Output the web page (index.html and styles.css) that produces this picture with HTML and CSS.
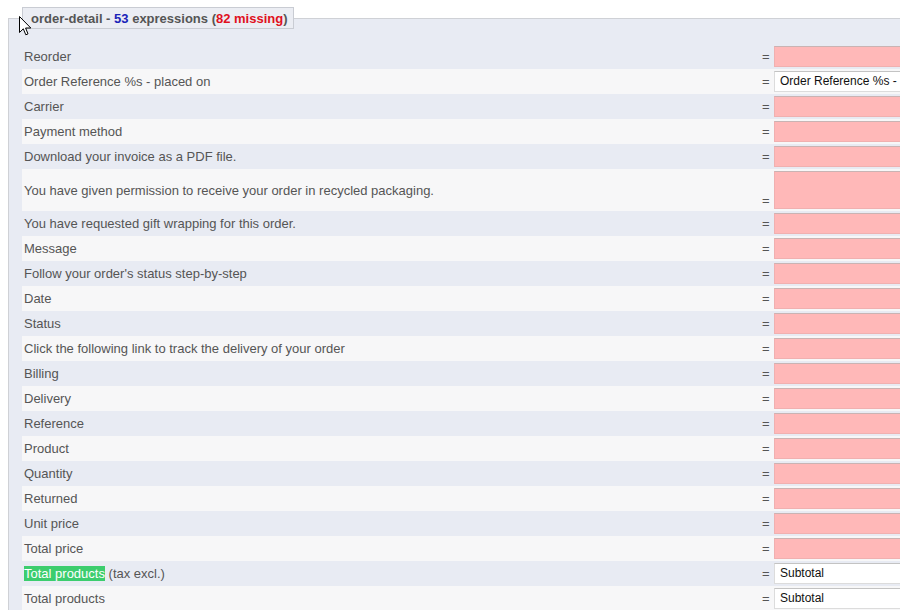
FILE: index.html
```html
<!DOCTYPE html>
<html>
<head>
<meta charset="utf-8">
<link rel="stylesheet" href="styles.css">
</head>
<body>
<fieldset class="group">
  <legend class="legend">order-detail - <span class="num">53</span> expressions (<span class="miss">82 missing</span>)</legend>
  <div class="row"><span class="label">Reorder</span><span class="eq">=</span><span class="field empty"></span></div>
  <div class="row"><span class="label">Order Reference %s - placed on</span><span class="eq">=</span><span class="field">Order Reference %s - placed on</span></div>
  <div class="row"><span class="label">Carrier</span><span class="eq">=</span><span class="field empty"></span></div>
  <div class="row"><span class="label">Payment method</span><span class="eq">=</span><span class="field empty"></span></div>
  <div class="row"><span class="label">Download your invoice as a PDF file.</span><span class="eq">=</span><span class="field empty"></span></div>
  <div class="row tall"><span class="label">You have given permission to receive your order in recycled packaging.</span><span class="eq">=</span><span class="field empty area"></span></div>
  <div class="row"><span class="label">You have requested gift wrapping for this order.</span><span class="eq">=</span><span class="field empty"></span></div>
  <div class="row"><span class="label">Message</span><span class="eq">=</span><span class="field empty"></span></div>
  <div class="row"><span class="label">Follow your order's status step-by-step</span><span class="eq">=</span><span class="field empty"></span></div>
  <div class="row"><span class="label">Date</span><span class="eq">=</span><span class="field empty"></span></div>
  <div class="row"><span class="label">Status</span><span class="eq">=</span><span class="field empty"></span></div>
  <div class="row"><span class="label">Click the following link to track the delivery of your order</span><span class="eq">=</span><span class="field empty"></span></div>
  <div class="row"><span class="label">Billing</span><span class="eq">=</span><span class="field empty"></span></div>
  <div class="row"><span class="label">Delivery</span><span class="eq">=</span><span class="field empty"></span></div>
  <div class="row"><span class="label">Reference</span><span class="eq">=</span><span class="field empty"></span></div>
  <div class="row"><span class="label">Product</span><span class="eq">=</span><span class="field empty"></span></div>
  <div class="row"><span class="label">Quantity</span><span class="eq">=</span><span class="field empty"></span></div>
  <div class="row"><span class="label">Returned</span><span class="eq">=</span><span class="field empty"></span></div>
  <div class="row"><span class="label">Unit price</span><span class="eq">=</span><span class="field empty"></span></div>
  <div class="row"><span class="label">Total price</span><span class="eq">=</span><span class="field empty"></span></div>
  <div class="row"><span class="label"><span class="hl">Total products</span> (tax excl.)</span><span class="eq">=</span><span class="field">Subtotal</span></div>
  <div class="row"><span class="label">Total products</span><span class="eq">=</span><span class="field">Subtotal</span></div>
</fieldset>
<svg class="cursor" width="13" height="21" viewBox="0 0 13 21"><path d="M0.5 0.5 L0.5 16.5 L4.3 12.8 L6.8 18.8 L9 17.9 L6.6 12 L11.8 12 Z" fill="#fff" stroke="#000" stroke-width="1" stroke-linejoin="miter"/></svg>
</body>
</html>
```
FILE: styles.css
```css
html, body {
  margin: 0;
  padding: 0;
  overflow: hidden;
  background: #fff;
}
body {
  padding: 7px 0 0 8px;
  width: 900px;
  height: 610px;
  box-sizing: border-box;
  position: relative;
  font-family: "Liberation Sans", Arial, sans-serif;
}
.group {
  margin: 0;
  padding: 15px 0 0 13px;
  border: 1px solid #cfd1d6;
  border-right: none;
  border-bottom: none;
  background: #e8ebf3;
  width: 1000px;
  min-width: 0;
  box-sizing: border-box;
}
.legend {
  margin-left: 0;
  padding: 0 5px 0 8px;
  height: 22px;
  line-height: 21px;
  box-sizing: border-box;
  border: 1px solid #c9ccd3;
  background: #ebedf3;
  font-size: 13px;
  font-weight: bold;
  color: #555;
  white-space: nowrap;
}
.num { color: #1a23b8; }
.miss { color: #e0101c; }
.row {
  display: flex;
  align-items: center;
  height: 25px;
  background: #e8ebf3;
  font-size: 13px;
  color: #555;
}
.row:nth-child(odd) {
  background: #f7f7f8;
}
.row.tall {
  height: 42px;
}
.label {
  width: 740px;
  padding-left: 2px;
  box-sizing: border-box;
  white-space: nowrap;
}
.eq {
  width: 12px;
  color: #555;
  font-size: 13px;
}
.tall .eq {
  align-self: flex-end;
  padding-bottom: 3px;
}
.field {
  width: 220px;
  height: 21px;
  box-sizing: border-box;
  border: 1px solid #dcdcdc;
  border-top-color: #c3c3c3;
  background: #fff;
  color: #111;
  font-size: 12px;
  line-height: 19px;
  padding-left: 5px;
  white-space: nowrap;
  overflow: hidden;
}
.field.empty {
  background: #ffb8b8;
  border-color: #f0b0b0;
  border-top-color: #c9b3b3;
}
.field.area {
  height: 38px;
}
.hl {
  background: #3ccd6e;
  color: #fff;
}
.cursor {
  position: absolute;
  left: 19px;
  top: 16px;
}
```
